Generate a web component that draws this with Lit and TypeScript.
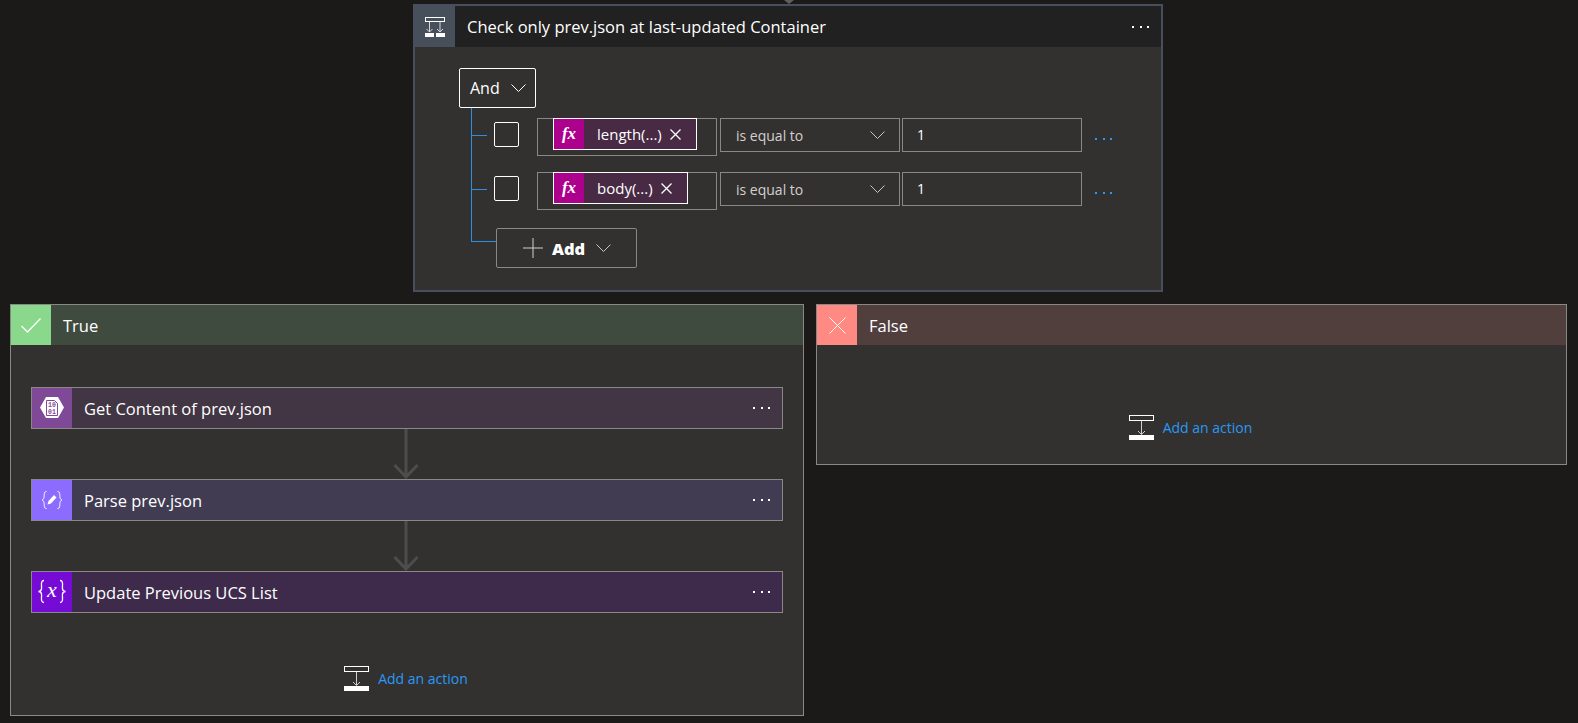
import { LitElement, css, html, svg } from "lit";
import { customElement } from "lit/decorators.js";

const chevron = html`<svg class="chev" width="15" height="8" viewBox="0 0 15 8"><path d="M.5.5l7 7 7-7" fill="none" stroke="currentColor"/></svg>`;

const addActionIcon = html`<svg width="25" height="25" viewBox="0 0 25 25">
  <rect x=".5" y=".5" width="24" height="5" fill="none" stroke="#fff"/>
  <path d="M12.5 6v13M9 16l3.500 3.500L16 16" fill="none" stroke="#d0d0d0"/>
  <rect y="20" width="25" height="5" fill="#fff"/>
</svg>`;

const arrow = html`<svg class="arrow" width="26" height="50" viewBox="0 0 26 50"><path d="M13 0v48M1.500 36 13 48l11.500-12" fill="none" stroke="#4d4d4d" stroke-width="3"/></svg>`;

const dots = html`<span class="dots"><i></i><i></i><i></i></span>`;

// all drawn on the 40x40 badge
const icons = {
  container: svg`<rect x="10.500" y="10.500" width="19" height="4" fill="none" stroke="#fff"/>
    <path d="M14.500 15v10M25 15v10M11.500 22l3 3 3-3M22 22l3 3 3-3" fill="none" stroke="#d8d8d8"/>
    <rect x="10" y="26" width="9" height="4" fill="#fff"/><rect x="21" y="26" width="9" height="4" fill="#fff"/>`,
  sql: svg`<path d="M14 9h12l6 10.500L26 30H14L8 19.500z" fill="#fff"/>
    <path d="M14.500 12.500h8l3 3v12h-11z" fill="none" stroke="#804998"/>
    <text x="20" y="19" class="tiny">10</text><text x="20" y="26" class="tiny">01</text>`,
  parse: svg`<path d="M14.500 11.500c-3 0-2 4-2.500 6-.3 1.300-1.200 2.500-2 2.500.8 0 1.700 1.200 2 2.500.5 2-.5 6 2.500 6M25.500 11.500c3 0 2 4 2.500 6 .3 1.300 1.200 2.500 2 2.500-.8 0-1.700 1.200-2 2.500-.5 2 .5 6-2.500 6" fill="none" stroke="#fff"/>
    <path d="M15.500 24.500l1-3.500 5.500-6 2.500 2.500-5.500 6z" fill="#fff"/>`,
  variable: svg`<path d="M12 8.500c-4 0-2 6-2.500 8.500-.3 1.500-2 2.500-3 2.500 1 0 2.700 1 3 2.500.5 2.500-1.500 8.500 2.500 8.500M28 8.500c4 0 2 6 2.500 8.500.3 1.500 2 2.500 3 2.500-1 0-2.700 1-3 2.500-.5 2.500 1.500 8.500-2.500 8.500" fill="none" stroke="#fff" stroke-width="1.300"/>
    <text x="20" y="25" class="var">x</text>`,
};

@customElement("app-root")
export class AppRoot extends LitElement {
  static styles = css`
    :host {
      display: block;
      height: 723px;
      overflow: hidden;
      background: #1b1a19;
      color: #fff;
      font-family: "Open Sans", "Noto Sans", sans-serif;
    }
    svg {
      display: block;
      flex: none;
    }
    .tiny {
      fill: #804998;
      font: 700 6.500px "Liberation Mono", monospace;
      text-anchor: middle;
    }
    .var {
      fill: #fff;
      font: italic 22px "Liberation Serif", serif;
      text-anchor: middle;
    }

    .tip {
      width: 0;
      height: 0;
      margin-left: 784px;
      border: 5px solid transparent;
      border-top: 4px solid #605e5c;
      border-bottom: 0;
    }

    .condition {
      width: 750px;
      height: 288px;
      margin-left: 413px;
      box-sizing: border-box;
      border: 2px solid #464f5b;
      background: #323130;
    }
    .head {
      display: flex;
      align-items: center;
      height: 40px;
      font-size: 16.500px;
    }
    .condition .head {
      height: 41px;
      background: #212121;
    }
    .badge {
      display: flex;
      align-items: center;
      justify-content: center;
      width: 40px;
      height: 100%;
      flex: none;
    }
    .label {
      flex: 1;
      padding-left: 12px;
      white-space: nowrap;
    }
    .dots {
      display: flex;
      gap: 5.500px;
      margin-right: 12px;
    }
    .dots i {
      width: 2px;
      height: 2px;
      background: #fff;
    }

    .tree {
      padding: 21px 0 0 44px;
    }
    .and {
      display: flex;
      align-items: center;
      gap: 11px;
      width: 77px;
      height: 40px;
      box-sizing: border-box;
      padding-left: 10px;
      border: 1px solid #fff;
      border-radius: 2px;
      font-size: 16px;
    }
    .branch {
      margin-left: 12px;
    }
    .row {
      display: flex;
      align-items: flex-start;
      height: 56px;
      border-left: 1px solid #2b8fe6;
    }
    .row:first-child {
      height: 64px;
      padding-top: 10px;
      box-sizing: border-box;
    }
    .tick {
      width: 15px;
      height: 18px;
      flex: none;
      box-sizing: border-box;
      border-bottom: 1px solid #2b8fe6;
    }
    .check {
      width: 25px;
      height: 25px;
      box-sizing: border-box;
      margin: 4px 0 0 7px;
      border: 1px solid #fff;
      border-radius: 2px;
      flex: none;
    }
    .field {
      display: flex;
      width: 180px;
      height: 38px;
      box-sizing: border-box;
      margin-left: 18px;
      padding-left: 15px;
      border: 1px solid #8a8886;
    }
    .chip {
      display: flex;
      align-items: center;
      height: 32px;
      box-sizing: border-box;
      margin-top: -1px;
      border: 1px solid #fff;
      background: #482a44;
      font-size: 15px;
    }
    .fx {
      display: flex;
      align-items: center;
      justify-content: center;
      width: 30px;
      height: 100%;
      background: #ad008c;
      font: italic 700 17px "Liberation Serif", serif;
    }
    .chip span {
      margin: 0 8px 0 13px;
    }
    .select,
    .value {
      display: flex;
      align-items: center;
      height: 34px;
      box-sizing: border-box;
      margin-left: 3px;
      border: 1px solid #8a8886;
      font-size: 14px;
    }
    .select {
      justify-content: space-between;
      width: 180px;
      padding: 0 14px 0 15px;
      color: #d2d0ce;
    }
    .select .chev {
      color: #c8c6c4;
    }
    .value {
      width: 180px;
      margin-left: 2px;
      padding: 0 0 2px 14px;
    }
    .more {
      margin: 20px 0 0 13px;
    }
    .more .dots {
      margin: 0;
    }
    .more .dots i {
      background: #2899f5;
    }
    .last {
      display: flex;
      align-items: flex-start;
    }
    .elbow {
      width: 25px;
      height: 14px;
      flex: none;
      box-sizing: border-box;
      border-left: 1px solid #2b8fe6;
      border-bottom: 1px solid #2b8fe6;
    }
    .add {
      display: flex;
      align-items: center;
      width: 141px;
      height: 40px;
      box-sizing: border-box;
      padding-left: 26px;
      border: 1px solid #8a8886;
      border-radius: 2px;
      font-size: 16.500px;
      font-weight: 700;
    }
    .add b {
      margin: 0 11px 0 9px;
    }
    .add .chev {
      color: #c8c6c4;
    }

    .panels {
      display: flex;
      align-items: flex-start;
      gap: 12px;
      margin: 12px 0 0 10px;
    }
    .panel {
      box-sizing: border-box;
      border: 1px solid #8a8886;
      background: #323130;
    }
    .yes {
      width: 794px;
      height: 412px;
    }
    .no {
      width: 751px;
      height: 161px;
    }
    .yes > .head {
      background: #3f4b3e;
    }
    .yes .badge.ok {
      background: #89d88c;
    }
    .no > .head {
      background: #513f3e;
    }
    .no .badge {
      background: #ff8a84;
    }
    .steps {
      padding: 42px 20px 0;
    }
    .step {
      width: 752px;
      height: 42px;
      box-sizing: border-box;
      border: 1px solid #8a8886;
    }
    .arrow {
      margin-left: 362px;
    }
    .s1 {
      background: #423544;
    }
    .s1 .badge {
      background: #804998;
    }
    .s2 {
      background: #413c52;
    }
    .s2 .badge {
      background: #8c6cff;
    }
    .s3 {
      background: #3e2b4b;
    }
    .s3 .badge {
      background: #770bd6;
    }
    .action {
      display: flex;
      align-items: center;
      justify-content: center;
      gap: 9px;
      padding-right: 2px;
      color: #2899f5;
      font-size: 14px;
    }
    .yes .action {
      margin-top: 53px;
    }
    .no .action {
      margin-top: 70px;
    }
  `;

  private condRow(name: string, chipWidth: number) {
    return html`<div class="row">
      <div class="tick"></div>
      <div class="check"></div>
      <div class="field">
        <div class="chip" style="width:${chipWidth}px">
          <div class="fx">fx</div>
          <span>${name}</span>
          <svg width="11" height="11" viewBox="0 0 11 11"><path d="M.5.5l10 10M10.500.5l-10 10" stroke="#fff" stroke-width="1.300" fill="none"/></svg>
        </div>
      </div>
      <div class="select">is equal to ${chevron}</div>
      <div class="value">1</div>
      <div class="more">${dots}</div>
    </div>`;
  }

  private step(cls: string, icon: unknown, name: string) {
    return html`<div class="step ${cls}">
      <div class="head">
        <div class="badge">
          <svg width="40" height="40" viewBox="0 0 40 40">${icon}</svg>
        </div>
        <div class="label">${name}</div>
        ${dots}
      </div>
    </div>`;
  }

  render() {
    return html`
      <div class="tip"></div>
      <section class="condition">
        <div class="head">
          <div class="badge" style="background:#474f5a">
            <svg width="40" height="40" viewBox="0 0 40 40">${icons.container}</svg>
          </div>
          <div class="label">Check only prev.json at last-updated Container</div>
          ${dots}
        </div>
        <div class="tree">
          <div class="and">And ${chevron}</div>
          <div class="branch">
            ${this.condRow("length(...)", 144)}
            ${this.condRow("body(...)", 135)}
            <div class="last">
              <div class="elbow"></div>
              <div class="add">
                <svg width="20" height="20" viewBox="0 0 20 20"><path d="M10 0v20M0 10h20" stroke="#d2d0ce" fill="none"/></svg>
                <b>Add</b>
                ${chevron}
              </div>
            </div>
          </div>
        </div>
      </section>
      <div class="panels">
        <section class="panel yes">
          <div class="head">
            <div class="badge ok">
              <svg width="20" height="15" viewBox="0 0 20 15"><path d="M.5 8 6.500 14 19.500.5" fill="none" stroke="#fff" stroke-width="1.300"/></svg>
            </div>
            <div class="label">True</div>
          </div>
          <div class="steps">
            ${this.step("s1", icons.sql, "Get Content of prev.json")}
            ${arrow}
            ${this.step("s2", icons.parse, "Parse prev.json")}
            ${arrow}
            ${this.step("s3", icons.variable, "Update Previous UCS List")}
          </div>
          <div class="action">${addActionIcon} Add an action</div>
        </section>
        <section class="panel no">
          <div class="head">
            <div class="badge">
              <svg width="17" height="17" viewBox="0 0 17 17"><path d="M.5.5l16 16M16.500.5l-16 16" fill="none" stroke="#fff"/></svg>
            </div>
            <div class="label">False</div>
          </div>
          <div class="action">${addActionIcon} Add an action</div>
        </section>
      </div>
    `;
  }
}
